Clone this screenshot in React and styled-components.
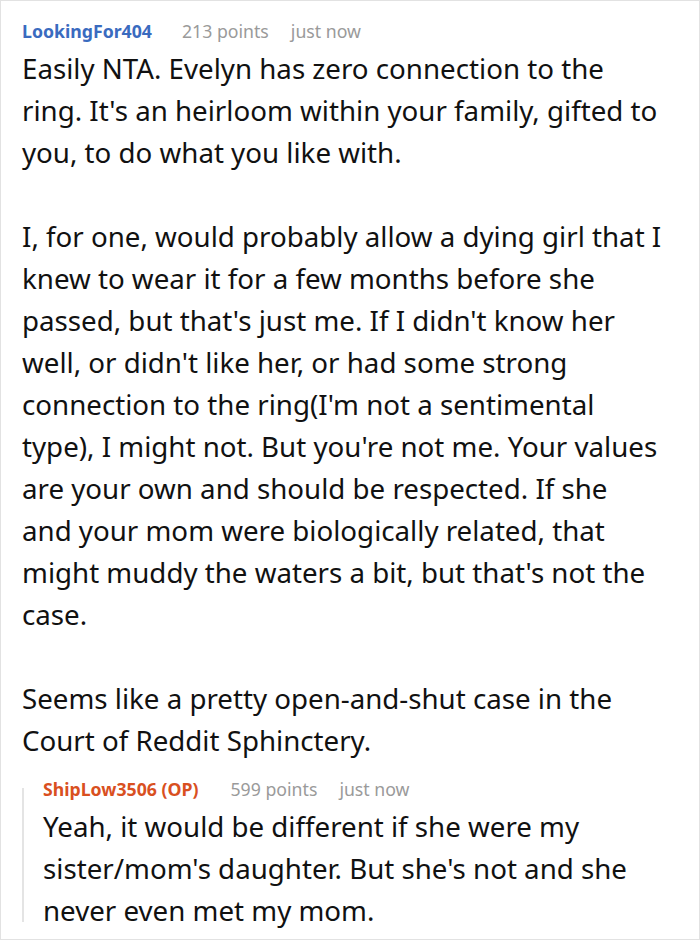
import React from "react";
import styled, { createGlobalStyle } from "styled-components";

const GlobalStyle = createGlobalStyle`
  html, body {
    margin: 0;
    padding: 0;
    background: #ffffff;
  }
  body {
    font-family: "Noto Sans", "Open Sans", sans-serif;
    color: #111111;
  }
`;

const comment = {
  author: "LookingFor404",
  points: 213,
  time: "just now",
  paragraphs: [
    "Easily NTA. Evelyn has zero connection to the ring. It's an heirloom within your family, gifted to you, to do what you like with.",
    "I, for one, would probably allow a dying girl that I knew to wear it for a few months before she passed, but that's just me. If I didn't know her well, or didn't like her, or had some strong connection to the ring(I'm not a sentimental type), I might not. But you're not me. Your values are your own and should be respected. If she and your mom were biologically related, that might muddy the waters a bit, but that's not the case.",
    "Seems like a pretty open-and-shut case in the Court of Reddit Sphinctery.",
  ],
  reply: {
    author: "ShipLow3506 (OP)",
    points: 599,
    time: "just now",
    paragraphs: [
      "Yeah, it would be different if she were my sister/mom's daughter. But she's not and she never even met my mom.",
    ],
  },
};

function CommentHeader({ author, points, time, op }) {
  return (
    <StyledHeader>
      <StyledAuthor $op={op}>{author}</StyledAuthor>
      <StyledMeta>{points} points</StyledMeta>
      <StyledMeta>{time}</StyledMeta>
    </StyledHeader>
  );
}

export default function App() {
  const { reply } = comment;
  return (
    <>
      <GlobalStyle />
      <StyledPage>
        <CommentHeader
          author={comment.author}
          points={comment.points}
          time={comment.time}
        />
        <StyledBody>
          {comment.paragraphs.map((text) => (
            <StyledParagraph key={text}>{text}</StyledParagraph>
          ))}
        </StyledBody>
        <StyledReply>
          <CommentHeader
            author={reply.author}
            points={reply.points}
            time={reply.time}
            op
          />
          <StyledBody>
            {reply.paragraphs.map((text) => (
              <StyledParagraph key={text}>{text}</StyledParagraph>
            ))}
          </StyledBody>
        </StyledReply>
      </StyledPage>
    </>
  );
}

const StyledPage = styled.div`
  box-sizing: border-box;
  width: 700px;
  height: 940px;
  border: 1px solid #e2e2e2;
  padding: 17px 37px 0 21px;
  overflow: hidden;
`;

const StyledHeader = styled.div`
  display: flex;
  align-items: baseline;
  font-size: 17.7px;
  line-height: 26px;
  margin-bottom: 3px;
`;

const StyledAuthor = styled.span`
  font-weight: 700;
  color: ${(props) => (props.$op ? "#d9501f" : "#3a6bbf")};
  margin-right: ${(props) => (props.$op ? "32px" : "30px")};
`;

const StyledMeta = styled.span`
  color: #9a9a9a;
  margin-right: 22px;
`;

const StyledBody = styled.div`
  font-size: 27.7px;
  line-height: 42px;
`;

const StyledParagraph = styled.p`
  margin: 0 0 42px 0;

  &:last-child {
    margin-bottom: 0;
  }
`;

const StyledReply = styled.div`
  position: relative;
  margin-top: 15px;
  padding-left: 21px;

  &::before {
    content: "";
    position: absolute;
    left: 0;
    top: 12px;
    bottom: 9px;
    width: 2px;
    background: #e4e4e4;
  }
`;
